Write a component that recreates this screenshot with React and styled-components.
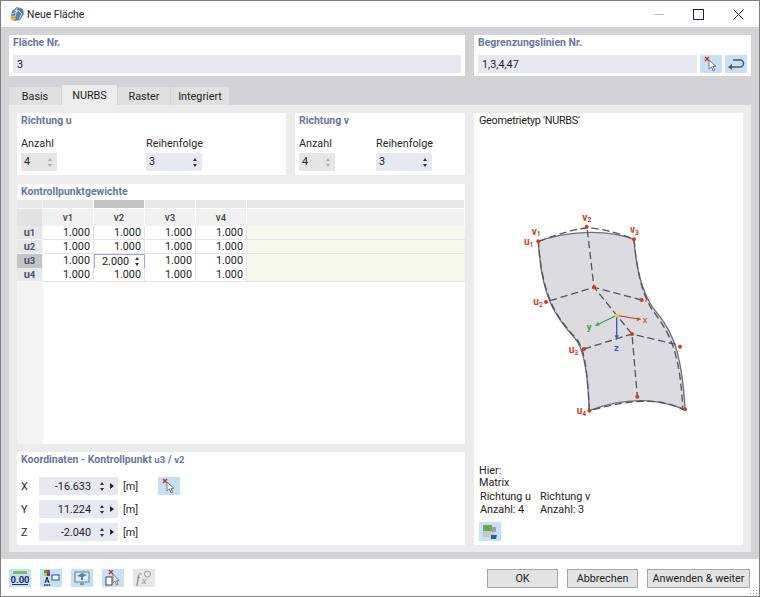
import React from 'react';
import styled, { createGlobalStyle } from 'styled-components';

const Global = createGlobalStyle`
  html, body { margin: 0; padding: 0; background: #fff; }
  * { box-sizing: border-box; }
`;

const Window = styled.div`
  width: 760px;
  height: 597px;
  border: 1px solid #808080;
  background: #fff;
  display: flex;
  flex-direction: column;
  font-family: Roboto, "Open Sans", sans-serif;
  font-size: 10.8px;
  color: #2a2a2a;
  position: relative;
  overflow: hidden;
`;

const TitleBar = styled.div`
  height: 26px;
  display: flex;
  align-items: center;
  padding-left: 8px;
  gap: 2px;
  font-size: 10.4px;
  color: #222;
`;

const TitleText = styled.span`
  flex: 1;
`;

const WinButtons = styled.div`
  display: flex;
  align-items: center;
  margin-right: 15px;
  gap: 29px;
`;

const Main = styled.div`
  height: 532px;
  background: #d3d3d7;
  padding: 8px 8px 7px;
  display: flex;
  flex-direction: column;
`;

const TopRow = styled.div`
  display: grid;
  grid-template-columns: 456px 277px;
  gap: 9px;
  height: 41px;
`;

const Card = styled.div`
  background: #fff;
  padding: 1px 4px 3px;
  display: flex;
  flex-direction: column;
  min-height: 0;
`;

const CardTitle = styled.div`
  font-size: 10.5px;
  font-weight: 700;
  line-height: 14px;
  color: #6a769e;
  white-space: nowrap;
`;

const Small = styled.span`
  font-size: 9.5px;
`;

const InputRow = styled.div`
  display: flex;
  gap: 3px;
  margin-top: 5px;
`;

const Input = styled.div`
  flex: 1;
  height: 18px;
  background: #e8e8f3;
  display: flex;
  align-items: center;
  padding: 0 4px;
  color: #222;
`;

const IconButton = styled.div`
  width: 22px;
  height: ${({ $h }) => $h || 18}px;
  flex: none;
  background: ${({ $off }) => ($off ? '#e6e6e6' : '#c6e1f5')};
  display: flex;
  align-items: center;
  justify-content: center;
`;

const Tabs = styled.div`
  display: flex;
  align-items: flex-end;
  height: 29px;
  gap: 1px;
`;

const Tab = styled.div`
  width: ${({ $w }) => $w}px;
  height: ${({ $active }) => ($active ? 20 : 18)}px;
  background: ${({ $active }) => ($active ? '#ececec' : '#e0e0e0')};
  display: flex;
  align-items: center;
  justify-content: center;
  color: #222;
`;

const Panel = styled.div`
  flex: 1;
  min-height: 0;
  background: #ececec;
  padding: 8px 8px 7px;
  display: grid;
  grid-template-columns: 448px 269px;
  gap: 9px;
`;

const LeftColumn = styled.div`
  display: grid;
  grid-template-rows: 62px 260px 93px;
  row-gap: 8.5px;
  min-height: 0;
`;

const DirectionRow = styled.div`
  display: grid;
  grid-template-columns: 269px 170px;
  gap: 9px;
`;

const FieldGrid = styled.div`
  display: grid;
  grid-template-columns: ${({ $cols }) => $cols};
  margin-top: 9px;
`;

const Field = styled.div`
  display: flex;
  flex-direction: column;
  gap: 2px;
  line-height: 14px;
  color: #2a2a2a;
`;

const SpinInput = styled.div`
  width: ${({ $w }) => $w}px;
  height: 18px;
  background: ${({ $off }) => ($off ? '#e6e6e6' : '#e8e8f3')};
  display: flex;
  align-items: center;
  justify-content: space-between;
  padding: 0 5px 0 3px;
  color: #222;
`;

const SpinBox = styled.div`
  display: flex;
  flex-direction: column;
  gap: 3px;
`;

const Arrow = styled.div`
  width: 0;
  height: 0;
  border-left: 2.5px solid transparent;
  border-right: 2.5px solid transparent;
  border-${({ $down }) => ($down ? 'top' : 'bottom')}: 3px solid ${({ $off }) => ($off ? '#aaa' : '#333')};
`;

const Spinner = ({ off }) => (
  <SpinBox>
    <Arrow $off={off} />
    <Arrow $off={off} $down />
  </SpinBox>
);

const TableCard = styled(Card)`
  padding: 0;
`;

const TableTitle = styled(CardTitle)`
  padding: 1px 4px 0;
  height: 16px;
`;

const Table = styled.div`
  flex: 1;
  display: flex;
  flex-direction: column;
  background: linear-gradient(90deg, #f4f4f4 26px, #fff 26px);
`;

const TableRow = styled.div`
  display: grid;
  grid-template-columns: 26px 51px 51px 51px 51px 1fr;
  height: ${({ $h }) => $h}px;
  margin-bottom: ${({ $mb }) => $mb || 0}px;
`;

const StripCell = styled.div`
  background: ${({ $on }) => ($on ? '#c4c4c4' : '#e8e8e8')};
  margin-right: 1px;
`;

const HeadCell = styled.div`
  background: ${({ $corner }) => ($corner ? '#e2e2e2' : '#f1f1f1')};
  margin-right: 1px;
  display: flex;
  align-items: center;
  justify-content: center;
  font-size: 10px;
  font-weight: 500;
  color: #444;
`;

const RowHead = styled.div`
  background: ${({ $on }) => ($on ? '#c4c4c4' : '#e8e8e8')};
  margin: 0 1px 1px 0;
  display: flex;
  align-items: center;
  justify-content: center;
  font-size: 11px;
  font-weight: 700;
  color: #4a5468;
`;

const Cell = styled.div`
  border-right: 1px solid #e4e4e4;
  border-bottom: 1px solid #e4e4e4;
  display: flex;
  align-items: center;
  justify-content: flex-end;
  padding-right: 3px;
  color: #222;
  background: #fff;
`;

const EditCell = styled(Cell)`
  border: 1px solid #a9a4e6;
  justify-content: space-between;
  padding: 0 5px 0 7px;
`;

const RowFill = styled.div`
  background: #f6f8ec;
  border-bottom: 1px solid #e4e4e4;
`;

const CoordRow = styled.div`
  display: grid;
  grid-template-columns: 18px 79px 40px 22px;
  align-items: center;
  height: 18px;
  margin-bottom: 5px;
`;

const CoordList = styled.div`
  margin-top: 10px;
`;

const CoordInput = styled.div`
  height: 18px;
  background: #e8e8f3;
  display: grid;
  grid-template-columns: 52px 13px 10px;
  align-items: center;
  justify-items: end;
  color: #222;
`;

const RightArrow = styled.div`
  width: 0;
  height: 0;
  border-top: 3px solid transparent;
  border-bottom: 3px solid transparent;
  border-left: 4px solid #222;
`;

const Unit = styled.span`
  padding-left: 5px;
`;

const InfoCard = styled(Card)`
  padding: 1px 5px 4px;
`;

const InfoTitle = styled.div`
  line-height: 14px;
  color: #222;
  letter-spacing: -0.25px;
`;

const Diagram = styled.div`
  flex: 1;
  display: flex;
  justify-content: flex-start;
  padding: 72px 0 0 21px;
`;

const InfoLine = styled.div`
  color: #222;
  line-height: 12px;
`;

const InfoGrid = styled.div`
  display: grid;
  grid-template-columns: 60px 70px;
  padding-left: 1px;
  margin-top: 1px;
  color: #222;
  line-height: 13px;
`;

const InfoButton = styled.div`
  margin-top: 6px;
`;

const Footer = styled.div`
  flex: 1;
  display: flex;
  align-items: center;
  justify-content: space-between;
  padding: 0 9px 0 8px;
`;

const FootIcons = styled.div`
  display: flex;
  gap: 9px;
`;

const FootButtons = styled.div`
  display: flex;
  gap: 9px;
  margin-top: 2px;
`;

const Button = styled.div`
  width: ${({ $w }) => $w}px;
  height: 19px;
  background: #e3e3e3;
  border: 1px solid #a8a8a8;
  display: flex;
  align-items: center;
  justify-content: center;
  color: #222;
`;

const Grip = styled.svg`
  position: absolute;
  right: 1px;
  bottom: 1px;
`;

const Picker = () => (
  <svg width="16" height="16" viewBox="0 0 16 16">
    <path d="M2 1l4 4M6 1L2 5" stroke="#d8232a" strokeWidth="1.4" />
    <path d="M6 4v9l2.400-2 1.800 4 1.600-.8-1.800-3.800H13z" fill="#fff" stroke="#777" strokeWidth="1" />
  </svg>
);

const ReturnIcon = () => (
  <svg width="18" height="14" viewBox="0 0 18 14">
    <path d="M4 10h9a3 3 0 0 0 0-7H6" fill="none" stroke="#555" strokeWidth="1.500" />
    <path d="M1 10l4-3v6z" fill="#555" />
  </svg>
);

const AppIcon = () => (
  <svg width="16" height="16" viewBox="0 0 16 16">
    <path d="M3 5l5-4 6 2 1 5-4 6-6 1-3-4z" fill="#5a7fa8" />
    <path d="M5 4l5 1 3 3-3 5M3 8l6-3M8 2l-2 9" stroke="#d9e4ee" strokeWidth=".8" fill="none" />
    <circle cx="4" cy="12" r="2.500" fill="#e0b53a" />
  </svg>
);

const DecimalIcon = () => (
  <svg width="18" height="16" viewBox="0 0 18 16">
    <rect x="2" y="1" width="14" height="3" fill="#7fbf5f" />
    <text x="9" y="12.500" textAnchor="middle" fontSize="9.500" fontWeight="700" fill="#1f2f60" fontFamily="Roboto, sans-serif">0.00</text>
    <path d="M1 14.500h16" stroke="#1f2f60" />
  </svg>
);

const ColorIcon = () => (
  <svg width="18" height="16" viewBox="0 0 18 16">
    <rect x="2" y="0" width="3" height="3" fill="#3fa83f" />
    <rect x="5" y="0" width="3" height="3" fill="#d83030" />
    <rect x="2" y="3" width="3" height="3" fill="#e0c030" />
    <rect x="5" y="3" width="3" height="3" fill="#3050c0" />
    <rect x="10" y="5" width="7" height="5" fill="#fff" stroke="#33506e" />
    <path d="M3 13l2-6 2 6M3.800 11h2.400" stroke="#222" fill="none" strokeWidth="1" />
    <path d="M2 15h7" stroke="#222" strokeWidth="1.500" strokeDasharray="1.500 .8" />
  </svg>
);

const ScreenIcon = () => (
  <svg width="18" height="16" viewBox="0 0 18 16">
    <rect x="2" y="2" width="14" height="10" fill="#dfe8ef" stroke="#5f7f96" />
    <path d="M4 6l5-3 5 2-4 2v3H8V7z" fill="#4f87a8" />
    <path d="M7 14h4" stroke="#5f7f96" strokeWidth="1.500" />
  </svg>
);

const DocPickIcon = () => (
  <svg width="18" height="16" viewBox="0 0 18 16">
    <path d="M5 0l4 4M9 0L5 4" stroke="#d8232a" strokeWidth="1.300" />
    <rect x="2" y="7" width="6" height="8" fill="#fff" stroke="#445" />
    <path d="M9 4v9l2-2 1.500 4 1.500-.7-1.500-3.600H15z" fill="#eee" stroke="#777" strokeWidth=".9" />
  </svg>
);

const FormulaIcon = () => (
  <svg width="18" height="16" viewBox="0 0 18 16">
    <text x="1" y="14" fontSize="14" fontStyle="italic" fill="#8a8a8a" fontFamily="Liberation Serif, serif">f</text>
    <text x="7" y="14" fontSize="10" fontStyle="italic" fill="#8a8a8a" fontFamily="Liberation Serif, serif">x</text>
    <circle cx="12.500" cy="4" r="3" fill="none" stroke="#999" />
  </svg>
);

const MatrixIcon = () => (
  <svg width="18" height="16" viewBox="0 0 18 16">
    <rect x="2" y="1" width="9" height="6" fill="#6aa84f" />
    <rect x="2" y="7" width="11" height="6" fill="#c8c8c8" />
    <rect x="11" y="3" width="4" height="5" fill="#a0a0a0" />
    <path d="M10 11h6l-1 4h-5z" fill="#2f5a96" />
  </svg>
);

const PointLabel = ({ x, y, l, n }) => (
  <text x={x} y={y} fill="#cc3f1c" fontSize="30" fontWeight="700" fontFamily="Roboto, sans-serif">
    {l}<tspan fontSize="20" dy="5">{n}</tspan>
  </text>
);

const points = [
  [115, 124], [260, 80], [402, 118], [138, 306], [282, 262], [425, 300],
  [252, 447], [396, 402], [540, 440], [268, 632], [412, 590], [555, 628],
];

const NurbsDiagram = () => (
  <svg width="210" height="220" viewBox="0 0 630 660">
    <path
      d="M115 124C190 96 310 84 402 118C408 200 425 275 460 325C505 380 545 430 555 628C480 600 390 585 268 632C265 540 255 450 225 415C170 355 125 300 115 124Z"
      fill="#dcdce0"
      stroke="#6e6e78"
      strokeWidth="4"
    />
    <g fill="none" stroke="#55555f" strokeWidth="4" strokeDasharray="22 11">
      <path d="M115 124C180 100 240 84 260 84C300 84 360 100 402 118C410 200 420 265 452 322C490 380 540 420 548 628C490 600 420 590 268 632C262 540 260 460 232 420C170 350 128 300 115 124Z" />
      <path d="M262 90L282 262L396 402L412 590" />
      <path d="M150 302L282 262L440 304" />
      <path d="M252 447L396 402L530 434" />
    </g>
    {points.map(([x, y]) => <circle key={`${x}-${y}`} cx={x} cy={y} r="6" fill="#d23c14" />)}
    <path d="M350 346L415 357" stroke="#c8452a" strokeWidth="3.500" />
    <path d="M424 358l-14 6 2-12z" fill="#c8452a" />
    <path d="M350 346L292 374" stroke="#2ea04f" strokeWidth="3.500" />
    <path d="M284 378l10-12 5 10z" fill="#2ea04f" />
    <path d="M350 346V410" stroke="#2d5fc0" strokeWidth="4" />
    <path d="M350 420l-6-14h12z" fill="#2d5fc0" />
    <circle cx="350" cy="346" r="6" fill="#f2d21e" />
    <text x="428" y="370" fill="#c8452a" fontSize="28" fontFamily="Roboto, sans-serif">x</text>
    <text x="260" y="390" fill="#2ea04f" fontSize="28" fontWeight="700" fontFamily="Roboto, sans-serif">y</text>
    <text x="342" y="452" fill="#2d5fc0" fontSize="28" fontWeight="700" fontFamily="Roboto, sans-serif">z</text>
    <PointLabel x={95} y={104} l="v" n="1" />
    <PointLabel x={247} y={62} l="v" n="2" />
    <PointLabel x={390} y={100} l="v" n="3" />
    <PointLabel x={72} y={136} l="u" n="1" />
    <PointLabel x={100} y={316} l="u" n="2" />
    <PointLabel x={206} y={460} l="u" n="3" />
    <PointLabel x={230} y={642} l="u" n="4" />
  </svg>
);

const Sub = ({ l, n }) => <>{l}<Small>{n}</Small></>;

const columns = ['1', '2', '3', '4'];

const App = () => (
  <>
    <Global />
    <Window>
      <TitleBar>
        <AppIcon />
        <TitleText>Neue Fläche</TitleText>
        <WinButtons>
          <svg width="10" height="10" viewBox="0 0 10 10"><path d="M0 5.500h10" stroke="#c4c4c4" /></svg>
          <svg width="11" height="11" viewBox="0 0 11 11"><rect x=".5" y=".5" width="10" height="10" fill="none" stroke="#222" /></svg>
          <svg width="11" height="11" viewBox="0 0 11 11"><path d="M.5 .5l10 10M10.500 .5l-10 10" stroke="#222" /></svg>
        </WinButtons>
      </TitleBar>
      <Main>
        <TopRow>
          <Card>
            <CardTitle>Fläche Nr.</CardTitle>
            <InputRow><Input>3</Input></InputRow>
          </Card>
          <Card>
            <CardTitle>Begrenzungslinien Nr.</CardTitle>
            <InputRow>
              <Input>1,3,4,47</Input>
              <IconButton><Picker /></IconButton>
              <IconButton><ReturnIcon /></IconButton>
            </InputRow>
          </Card>
        </TopRow>
        <Tabs>
          <Tab $w={52}>Basis</Tab>
          <Tab $w={55} $active>NURBS</Tab>
          <Tab $w={52}>Raster</Tab>
          <Tab $w={58}>Integriert</Tab>
        </Tabs>
        <Panel>
          <LeftColumn>
            <DirectionRow>
              <Card>
                <CardTitle>Richtung u</CardTitle>
                <FieldGrid $cols="125px 100px">
                  <Field>Anzahl<SpinInput $w={36} $off>4<Spinner off /></SpinInput></Field>
                  <Field>Reihenfolge<SpinInput $w={56}>3<Spinner /></SpinInput></Field>
                </FieldGrid>
              </Card>
              <Card>
                <CardTitle>Richtung v</CardTitle>
                <FieldGrid $cols="77px 80px">
                  <Field>Anzahl<SpinInput $w={36} $off>4<Spinner off /></SpinInput></Field>
                  <Field>Reihenfolge<SpinInput $w={56}>3<Spinner /></SpinInput></Field>
                </FieldGrid>
              </Card>
            </DirectionRow>
            <TableCard>
              <TableTitle>Kontrollpunktgewichte</TableTitle>
              <Table>
                <TableRow $h={8} $mb={1}>
                  <StripCell />
                  <StripCell />
                  <StripCell $on />
                  <StripCell />
                  <StripCell />
                  <StripCell />
                </TableRow>
                <TableRow $h={17}>
                  <HeadCell $corner />
                  {columns.map((n) => <HeadCell key={n}><Sub l="v" n={n} /></HeadCell>)}
                  <HeadCell />
                </TableRow>
                {columns.map((n) => (
                  <TableRow key={n} $h={14}>
                    <RowHead $on={n === '3'}><Sub l="u" n={n} /></RowHead>
                    <Cell>1.000</Cell>
                    {n === '3'
                      ? <EditCell>2.000<Spinner /></EditCell>
                      : <Cell>1.000</Cell>}
                    <Cell>1.000</Cell>
                    <Cell>1.000</Cell>
                    <RowFill />
                  </TableRow>
                ))}
              </Table>
            </TableCard>
            <Card>
              <CardTitle>Koordinaten - Kontrollpunkt <Small>u3</Small> / <Small>v2</Small></CardTitle>
              <CoordList>
                {[['X', '-16.633'], ['Y', '11.224'], ['Z', '-2.040']].map(([label, value]) => (
                  <CoordRow key={label}>
                    <span>{label}</span>
                    <CoordInput>
                      <span>{value}</span>
                      <Spinner />
                      <RightArrow />
                    </CoordInput>
                    <Unit>[m]</Unit>
                    {label === 'X' && <IconButton><Picker /></IconButton>}
                  </CoordRow>
                ))}
              </CoordList>
            </Card>
          </LeftColumn>
          <InfoCard>
            <InfoTitle>Geometrietyp 'NURBS'</InfoTitle>
            <Diagram><NurbsDiagram /></Diagram>
            <InfoLine>Hier:</InfoLine>
            <InfoLine>Matrix</InfoLine>
            <InfoGrid>
              <span>Richtung u</span><span>Richtung v</span>
              <span>Anzahl: 4</span><span>Anzahl: 3</span>
            </InfoGrid>
            <InfoButton><IconButton $h={19}><MatrixIcon /></IconButton></InfoButton>
          </InfoCard>
        </Panel>
      </Main>
      <Footer>
        <FootIcons>
          <IconButton><DecimalIcon /></IconButton>
          <IconButton><ColorIcon /></IconButton>
          <IconButton><ScreenIcon /></IconButton>
          <IconButton><DocPickIcon /></IconButton>
          <IconButton $off><FormulaIcon /></IconButton>
        </FootIcons>
        <FootButtons>
          <Button $w={71}>OK</Button>
          <Button $w={71}>Abbrechen</Button>
          <Button $w={103}>Anwenden &amp; weiter</Button>
        </FootButtons>
      </Footer>
      <Grip width="9" height="9" viewBox="0 0 9 9">
        <path d="M7 1h1v1H7zM7 4h1v1H7zM4 4h1v1H4zM7 7h1v1H7zM4 7h1v1H4zM1 7h1v1H1z" fill="#999" />
      </Grip>
    </Window>
  </>
);

export default App;
